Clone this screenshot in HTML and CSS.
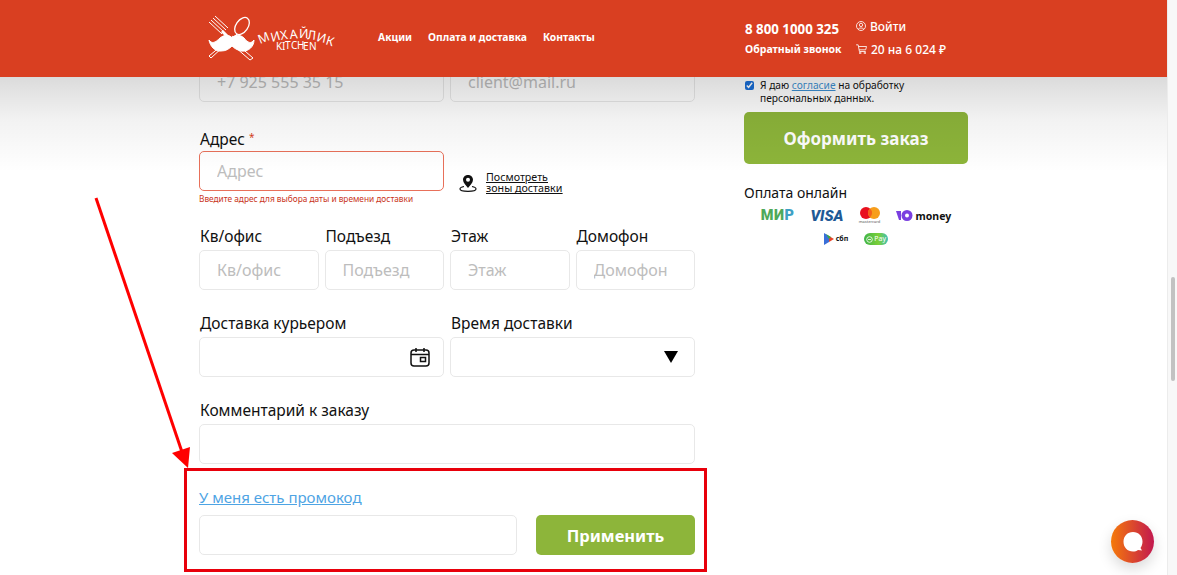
FILE: index.html
```html
<!DOCTYPE html>
<html lang="ru">
<head>
    <meta charset="UTF-8">
    <meta name="viewport" content="width=device-width, initial-scale=1.0">
    <title>Оформление заказа</title>
    <link rel="stylesheet" href="styles.css">
</head>
<body>
    <header class="header">
        <div class="logo">
            <svg width="124" height="44" viewBox="0 0 124 44">
                <g fill="none" stroke="#fff">
                    <path d="M0 6 L13 18 M2 4 L15 16 M4 2 L17 14 M6 0 L19 12" stroke-width="1"/>
                    <path d="M13 15 L25 27" stroke-width="3"/>
                    <ellipse cx="33" cy="10" rx="6" ry="9.500" transform="rotate(35 33 10)" stroke-width="1.300"/>
                    <path d="M28 18 L2 42 L0 40 L24 20" stroke-width="1"/>
                    <path d="M29 29 L44 42 L41 44 L26 31" stroke-width="1"/>
                </g>
                <text class="logo-top" x="51 63 72 81 90 98 107 116" y="28 26 24 23 22 23 25 28" rotate="-22 -16 -10 -5 0 6 12 18">МИХАЙЛИК</text>
                <text class="logo-bottom" x="67 73 76 82 88 94 100" y="34 33.500 33 33 33 33.500 34">KITCHEN</text>
                <path d="M0 24 C3 28 6 27 11 22 C16 18 21 19 23 22 C25 19 31 18 35 22 C39 27 42 28 45 24 C45 31 39 36 32 35 C28 34 25 32 23 30 C20 33 17 35 12 35 C6 36 1 30 0 24 Z" fill="#fff" stroke="#fff" stroke-width="1"/>
            </svg>
        </div>
        <nav class="nav">
            <a href="#">Акции</a>
            <a href="#">Оплата и доставка</a>
            <a href="#">Контакты</a>
        </nav>
        <div class="contacts">
            <div class="phone">8 800 1000 325</div>
            <div class="callback">Обратный звонок</div>
        </div>
        <div class="account">
            <div class="account-row">
                <svg width="10" height="10" viewBox="0 0 12 12" fill="none" stroke="#fff" stroke-width="1">
                    <circle cx="6" cy="6" r="5.400"/>
                    <circle cx="6" cy="4.700" r="2"/>
                    <path d="M2.500 10 C3.500 7.800 8.500 7.800 9.500 10"/>
                </svg>
                <span>Войти</span>
            </div>
            <div class="account-row">
                <svg width="11" height="10" viewBox="0 0 13 12" fill="none" stroke="#fff" stroke-width="1">
                    <path d="M0 1 H2.500 L4 9 H11.500 M3 3 H12.500 L11.500 7 H3.700"/>
                    <circle cx="5" cy="10.800" r="1"/>
                    <circle cx="10.500" cy="10.800" r="1"/>
                </svg>
                <span>20 на 6 024 ₽</span>
            </div>
        </div>
    </header>

    <div class="page">
        <main class="content">
            <form class="order-form">
                <div class="row row-first">
                    <input class="field" type="text" placeholder="+7 925 555 35 15">
                    <input class="field" type="text" placeholder="client@mail.ru">
                </div>

                <div class="row row-address">
                    <div class="col">
                        <label class="label">Адрес <span class="required">*</span></label>
                        <input class="field field-error" type="text" placeholder="Адрес">
                        <div class="error-text">Введите адрес для выбора даты и времени доставки</div>
                    </div>
                    <a class="zones" href="#">
                        <svg width="18" height="18" viewBox="0 0 18 18" fill="none" stroke="#111">
                            <path d="M9 1 C5.800 1 4 3.300 4 5.800 C4 8.800 7 11.500 9 14 C11 11.500 14 8.800 14 5.800 C14 3.300 12.200 1 9 1 Z" fill="#111" stroke="none"/>
                            <circle cx="9" cy="5.800" r="2" fill="#fff" stroke="none"/>
                            <path d="M5 12.500 C2.500 13 1 14 1 15 C1 16.500 5 17.300 9 17.300 C13 17.300 17 16.500 17 15 C17 14 15.500 13 13 12.500" stroke-width="1.200"/>
                        </svg>
                        <span>Посмотреть<br>зоны доставки</span>
                    </a>
                </div>

                <div class="row">
                    <div class="col">
                        <label class="label">Кв/офис</label>
                        <input class="field" type="text" placeholder="Кв/офис">
                    </div>
                    <div class="col">
                        <label class="label">Подъезд</label>
                        <input class="field" type="text" placeholder="Подъезд">
                    </div>
                    <div class="col">
                        <label class="label">Этаж</label>
                        <input class="field" type="text" placeholder="Этаж">
                    </div>
                    <div class="col">
                        <label class="label">Домофон</label>
                        <input class="field" type="text" placeholder="Домофон">
                    </div>
                </div>

                <div class="row">
                    <div class="col">
                        <label class="label">Доставка курьером</label>
                        <div class="field field-box">
                            <svg width="20" height="20" viewBox="0 0 20 20" fill="none" stroke="#111" stroke-width="1.500">
                                <rect x="1" y="3" width="18" height="16" rx="3"/>
                                <path d="M1 7.500 H19 M6 1 V5 M14 1 V5"/>
                                <rect x="10.500" y="10.500" width="5" height="4"/>
                            </svg>
                        </div>
                    </div>
                    <div class="col">
                        <label class="label">Время доставки</label>
                        <div class="field field-box field-select"><span class="triangle"></span></div>
                    </div>
                </div>

                <div class="row">
                    <div class="col">
                        <label class="label">Комментарий к заказу</label>
                        <input class="field" type="text">
                    </div>
                </div>

                <div class="promo">
                    <a class="promo-link" href="#">У меня есть промокод</a>
                    <div class="promo-row">
                        <input class="field" type="text">
                        <button class="btn btn-apply" type="button">Применить</button>
                    </div>
                </div>
            </form>

            <aside class="summary">
                <div class="agree">
                    <input class="agree-check" type="checkbox" checked>
                    <span>Я даю <a href="#">согласие</a> на обработку персональных данных.</span>
                </div>
                <button class="btn btn-order" type="button">Оформить заказ</button>
                <div class="pay-title">Оплата онлайн</div>
                <div class="pay-logos">
                    <span class="pay-mir">МИ<span class="pay-mir-end">Р</span></span>
                    <span class="pay-visa">VISA</span>
                    <span class="pay-mc">
                        <svg width="20" height="12" viewBox="0 0 20 12">
                            <circle cx="6" cy="6" r="6" fill="#e8101e"/>
                            <circle cx="14" cy="6" r="6" fill="#f79e1b"/>
                            <path d="M10 1.500 A6 6 0 0 1 10 10.500 A6 6 0 0 1 10 1.500 Z" fill="#f4621c"/>
                        </svg>
                        <span class="pay-mc-text">mastercard</span>
                    </span>
                    <span class="pay-money">
                        <svg width="17" height="11" viewBox="0 0 17 11">
                            <path d="M0 1 H5 V10 H3 Z" fill="#7a3fe0"/>
                            <circle cx="11" cy="5.500" r="5.500" fill="#7a3fe0"/>
                            <circle cx="11" cy="5.500" r="2" fill="#fff"/>
                        </svg>
                        money
                    </span>
                    <span class="pay-break"></span>
                    <span class="pay-sbp">
                        <svg width="10" height="12" viewBox="0 0 10 12">
                            <path d="M0 0 L5 3 V9 L0 12 Z" fill="#3a6fd8"/>
                            <path d="M5 3 L10 6 L5 9 Z" fill="#e8432a"/>
                            <path d="M2 1 L7 4 L5 6 Z" fill="#39a845"/>
                        </svg>
                        сбп
                    </span>
                    <span class="pay-green">
                        <svg width="7" height="7" viewBox="0 0 7 7" fill="none" stroke="#fff" stroke-width="0.800">
                            <circle cx="3.500" cy="3.500" r="2.800"/>
                            <path d="M2 3.500 H5"/>
                        </svg>
                        Pay
                    </span>
                </div>
            </aside>
        </main>
        <div class="scrollbar"><div class="scrollbar-thumb"></div></div>
    </div>

    <div class="highlight-box"></div>
    <svg class="arrow" width="110" height="290" viewBox="0 0 110 290">
        <path d="M6 8 L92 262" stroke="#f00" stroke-width="3" fill="none"/>
        <polygon points="98,278 82,263 100,257" fill="#f00"/>
    </svg>

    <button class="chat" type="button">
        <svg width="22" height="22" viewBox="0 0 22 22">
            <path d="M11 1 C16.500 1 20.500 5 20.500 10.500 C20.500 13.500 19.500 15.500 18.500 17 L20 19.500 L16 19 C14.500 20 13 20.500 11 20.500 C5.500 20.500 1.500 16.500 1.500 10.800 C1.500 5 5.500 1 11 1 Z" fill="#fff"/>
        </svg>
    </button>
</body>
</html>
```

FILE: styles.css
```css
* {
    box-sizing: border-box;
}
html, body {
    height: 100%;
}
body {
    margin: 0;
    overflow: hidden;
    background: #fff;
    color: #111;
    font-family: "Noto Sans", "Open Sans", sans-serif;
}
a {
    color: inherit;
}

/* header lies over the scrolled page */
.header {
    position: absolute;
    top: 0;
    left: 0;
    z-index: 5;
    width: 1167px;
    height: 77px;
    padding-left: 209px;
    display: flex;
    background: #d93f21;
    color: #fff;
}
.header::after {
    content: "";
    position: absolute;
    top: 77px;
    left: 0;
    right: 0;
    height: 95px;
    background: linear-gradient(rgba(0, 0, 0, 0.14), rgba(0, 0, 0, 0.05) 45%, rgba(0, 0, 0, 0));
    pointer-events: none;
}
.logo {
    width: 169px;
    padding-top: 16px;
}
.logo svg {
    display: block;
    overflow: visible;
}
.logo-top {
    fill: #fff;
    font-size: 12.500px;
}
.logo-bottom {
    fill: #fff;
    font-size: 10px;
}
.nav {
    width: 367px;
    display: flex;
    gap: 16px;
    padding-top: 30px;
    font-size: 10.300px;
    font-weight: 700;
}
.nav a {
    color: #fff;
    text-decoration: none;
    height: 16px;
}
.contacts {
    width: 111px;
    padding-top: 19px;
    font-weight: 700;
}
.phone {
    font-size: 13.300px;
    line-height: 20px;
}
.callback {
    margin-top: 2px;
    font-size: 10.500px;
    line-height: 16px;
}
.account {
    padding-top: 17px;
    font-size: 12px;
    font-weight: 500;
}
.account-row {
    display: flex;
    align-items: center;
    gap: 4px;
    height: 18px;
    margin-bottom: 5px;
}

/* page */
.page {
    display: flex;
    height: 100%;
}
.content {
    flex: 1;
    display: flex;
    gap: 49px;
    padding: 62px 0 0 199px;
}
.order-form {
    width: 496px;
}
.row {
    display: flex;
    gap: 6px;
    margin-bottom: 23px;
}
.row-first {
    margin-bottom: 25px;
}
.row-address .col {
    flex: 0 0 245px;
}
.col {
    flex: 1;
    min-width: 0;
}
.label {
    display: block;
    height: 20px;
    margin-bottom: 4px;
    padding-left: 1px;
    font-size: 15.500px;
    line-height: 20px;
}
.required {
    color: #d93f21;
    font-size: 10px;
    vertical-align: 4px;
}
.field {
    display: block;
    width: 100%;
    height: 40px;
    padding: 0 17px;
    border: 1px solid #e8e8e8;
    border-radius: 5px;
    background: #fff;
    font-family: inherit;
    font-size: 16px;
}
.field::placeholder {
    color: #bdbdbd;
}
.field-error {
    border-color: #e8705a;
}
.field-box {
    display: flex;
    align-items: center;
    justify-content: flex-end;
    padding-right: 13px;
}
.field-select {
    padding-right: 16px;
}
.triangle {
    width: 0;
    height: 0;
    border-left: 7.500px solid transparent;
    border-right: 7.500px solid transparent;
    border-top: 12px solid #000;
}
.error-text {
    height: 9px;
    margin-top: 3px;
    font-size: 8.300px;
    line-height: 10px;
    white-space: nowrap;
    color: #c9341b;
}
.zones {
    display: flex;
    align-items: center;
    gap: 9px;
    height: 32px;
    margin: 40px 0 0 9px;
    font-size: 10.700px;
    line-height: 11.500px;
}
.zones span {
    text-decoration: underline;
    white-space: nowrap;
}
.promo-link {
    display: block;
    height: 20px;
    font-size: 15px;
    line-height: 20px;
    color: #4ea4e4;
}
.promo-row {
    display: flex;
    gap: 19px;
    margin-top: 8px;
}
.promo-row .field {
    flex: 0 0 318px;
}
.btn {
    border: 0;
    border-radius: 5px;
    background: #8db53a;
    color: #fff;
    font-family: inherit;
    font-weight: 700;
}
.btn-apply {
    flex: 1;
    height: 40px;
    font-size: 16.500px;
}

/* right column */
.summary {
    width: 224px;
    padding-top: 17px;
}
.agree {
    display: flex;
    gap: 6px;
    height: 33px;
    font-size: 10.200px;
    line-height: 13px;
}
.agree a {
    color: #3d8fd1;
}
.agree-check {
    flex: none;
    width: 9px;
    height: 9px;
    margin: 2px 0 0 1px;
    accent-color: #1a6fd8;
}
.btn-order {
    display: block;
    width: 100%;
    height: 52px;
    font-size: 17px;
}
.pay-title {
    margin-top: 19px;
    font-size: 14px;
    line-height: 20px;
}
.pay-logos {
    display: flex;
    flex-wrap: wrap;
    align-items: center;
    justify-content: center;
    gap: 4px 16px;
    margin-top: 4px;
}
.pay-break {
    flex: 0 0 100%;
    height: 0;
}
.pay-mir {
    font-family: Roboto, sans-serif;
    font-size: 14.500px;
    font-weight: 900;
    letter-spacing: 0.500px;
    line-height: 16px;
    color: #4fa95a;
}
.pay-mir-end {
    color: #3ea0c4;
}
.pay-visa {
    font-family: Roboto, sans-serif;
    font-size: 15px;
    font-weight: 900;
    font-style: italic;
    line-height: 16px;
    color: #1f5a96;
}
.pay-mc {
    display: flex;
    flex-direction: column;
    align-items: center;
    width: 20px;
}
.pay-mc svg {
    display: block;
}
.pay-mc-text {
    height: 5px;
    font-size: 4px;
    line-height: 5px;
    color: #555;
}
.pay-money {
    display: flex;
    align-items: center;
    gap: 3px;
    font-size: 10.500px;
    font-weight: 700;
    line-height: 16px;
}
.pay-sbp {
    display: flex;
    align-items: center;
    gap: 2px;
    font-size: 7px;
    font-weight: 700;
    line-height: 14px;
}
.pay-green {
    display: flex;
    align-items: center;
    gap: 1px;
    width: 24px;
    height: 12px;
    padding-left: 2px;
    border-radius: 6px;
    background: linear-gradient(90deg, #3fb54a, #7ccf38 60%, #3fc0b8);
    color: #fff;
    font-size: 7px;
    line-height: 12px;
}

/* scrollbar */
.scrollbar {
    flex: 0 0 10px;
    padding: 277px 2px 0 3px;
    background: #f8f8f8;
    border-left: 1px solid #ececec;
}
.scrollbar-thumb {
    height: 104px;
    border-radius: 3px;
    background: #c2c2c2;
}

/* annotation over the page */
.highlight-box {
    position: absolute;
    left: 184px;
    top: 468px;
    width: 523px;
    height: 104px;
    border: 3px solid #e8000b;
}
.arrow {
    position: absolute;
    left: 90px;
    top: 190px;
}

.chat {
    position: absolute;
    left: 1111px;
    top: 520px;
    width: 43px;
    height: 43px;
    padding: 0;
    display: flex;
    align-items: center;
    justify-content: center;
    border: 0;
    border-radius: 50%;
    background: linear-gradient(90deg, #f57a0a, #c2184f);
    box-shadow: 0 6px 14px rgba(0, 0, 0, 0.15);
}
```
